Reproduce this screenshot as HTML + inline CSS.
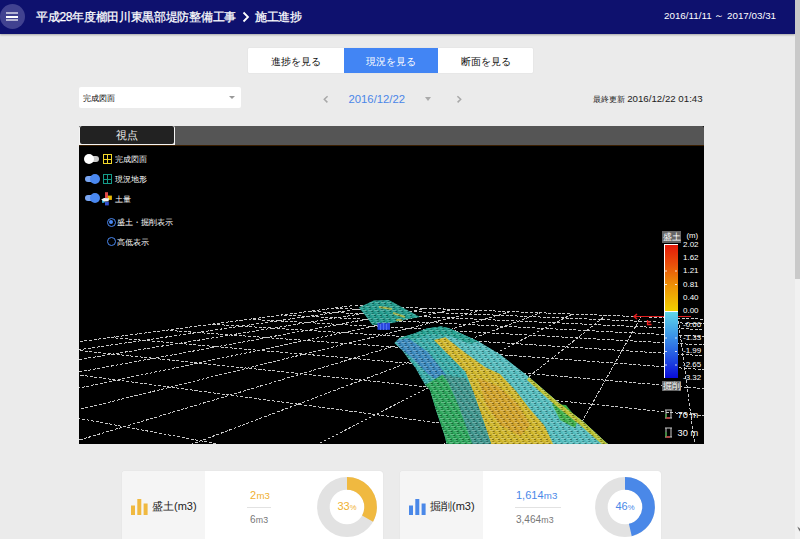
<!DOCTYPE html>
<html><head><meta charset="utf-8">
<style>
*{box-sizing:border-box;margin:0;padding:0}
html,body{width:800px;height:539px;overflow:hidden;background:#ebebeb;font-family:"Liberation Sans",sans-serif;color:#222}
.abs{position:absolute}
#hdr{position:absolute;left:0;top:0;width:795px;height:34px;background:#0e116e;box-shadow:0 1px 2px rgba(0,0,0,.3)}
#menu{position:absolute;left:0;top:4px;width:25px;height:25px;border-radius:50%;background:#414290}
#menu i{position:absolute;left:6px;width:12px;height:2px;background:#fff}
#ttl{position:absolute;left:36px;top:9px;font-size:12px;color:#fff;white-space:nowrap;letter-spacing:-0.3px;-webkit-text-stroke:0.25px #fff}
#rng{position:absolute;left:664px;top:10.2px;font-size:9.8px;color:#fff;white-space:nowrap}
#sb{position:absolute;left:795px;top:0;width:5px;height:539px;background:#f1f1f1}
#sbt{position:absolute;left:795px;top:0;width:5px;height:279px;background:#c9c9c9}
.tabs{position:absolute;left:248px;top:47.5px;width:285px;height:25.5px;background:#fff;border-radius:1px;overflow:hidden;box-shadow:0 0 1px rgba(0,0,0,.18)}
.tab{position:absolute;top:0;height:25.5px;line-height:27.5px;text-align:center;font-size:9.5px;color:#111}
#dd{position:absolute;left:79px;top:87px;width:162px;height:21px;background:#fff;border-radius:2px}
#dd span{position:absolute;left:4px;top:5.5px;font-size:8px;color:#000}
.tri{position:absolute;width:0;height:0;border-left:3px solid transparent;border-right:3px solid transparent;border-top:4px solid #999}
#panel{position:absolute;left:79px;top:126px;width:625px;height:318px;background:#000;overflow:hidden}
#ph{position:absolute;left:0;top:0;width:625px;height:19px;background:#555;border-radius:0 2px 0 0}
#pline{position:absolute;left:0;top:19px;width:625px;height:1px;background:#3a1e00}
#ptab{position:absolute;left:0;top:0;width:96px;height:19px;background:#f4f4f4;border-radius:2px 2px 0 0}
#ptab div{position:absolute;left:1px;top:0;width:94px;height:18px;background:#222;border-radius:2px;color:#eee;font-size:11px;text-align:center;line-height:18px}
.tg{position:absolute;left:5px;width:16px;height:10px}
.tg .trk{position:absolute;left:1px;top:2px;width:14px;height:6px;border-radius:3px}
.tg .knb{position:absolute;top:0;width:10px;height:10px;border-radius:50%}
.rad{position:absolute;width:9px;height:9px;border:1.3px solid #4a88f0;border-radius:50%}
.rad i{position:absolute;left:1.2px;top:1.2px;width:4px;height:4px;border-radius:50%;background:#4a88f0}
.cbl{position:absolute;width:19px;height:12px;background:#666;color:#fff;font-size:9px;line-height:12px;text-align:center}
.cbv{position:absolute;left:604px;color:#fff;font-size:8px;white-space:nowrap}
.lbl{position:absolute;color:#fff;font-size:8.3px;white-space:nowrap}
.ct{position:absolute;font-size:11px;color:#222;white-space:nowrap}
.cv{position:absolute;font-size:11px;white-space:nowrap}
.cv small,.cv2 small{font-size:0.88em;margin-left:.3px}
.pct small{font-size:0.7em}
.cv2{position:absolute;font-size:10px;color:#777;white-space:nowrap}
.sep{position:absolute;height:1px;background:#e2e2e2}
.pct{position:absolute;width:60px;text-align:center;font-size:11px;white-space:nowrap}
.card{position:absolute;top:471px;width:261px;height:90px;background:#fff;border-radius:3px;overflow:hidden;box-shadow:0 0 1px rgba(0,0,0,.15)}
.card .side{position:absolute;left:0;top:0;width:83px;height:100%;background:#f5f5f5}
</style></head><body>
<div id="hdr">
  <div id="menu"><i style="top:8px;opacity:.6"></i><i style="top:11.5px"></i><i style="top:15px;opacity:.6"></i></div>
  <div id="ttl">平成28年度櫛田川東黒部堤防整備工事</div>
  <svg class="abs" style="left:242px;top:11px" width="8" height="12"><path d="M1.5 1.5 L6 6 L1.5 10.5" stroke="#fff" stroke-width="1.8" fill="none"/></svg>
  <div id="ttl2" class="abs" style="left:255px;top:9px;font-size:12px;color:#fff;white-space:nowrap;letter-spacing:-0.3px;-webkit-text-stroke:0.25px #fff">施工進捗</div>
  <div id="rng">2016/11/11 ～ 2017/03/31</div>
</div>
<div id="sb"></div><div id="sbt"></div>
<svg class="abs" style="left:794px;top:523px" width="6" height="10"><path d="M3 3 L6 5.5 L6 8.5 L5 7.5 Z" fill="#333" stroke="#fff" stroke-width=".5"/></svg>

<div class="tabs">
  <div class="tab" style="left:0;width:96px">進捗を見る</div>
  <div class="tab" style="left:96px;width:94px;background:#4285f4;color:#fff">現況を見る</div>
  <div class="tab" style="left:190px;width:95px">断面を見る</div>
</div>

<div id="dd"><span>完成図面</span><div class="tri" style="left:150px;top:9px;border-left-width:3.5px;border-right-width:3.5px;border-top:3px solid #999"></div></div>

<svg class="abs" style="left:318px;top:90px" width="20" height="18"><path d="M9.6 6.2 L6.3 9.3 L9.4 12.4" stroke="#a8a8a8" stroke-width="1.5" fill="none"/></svg>
<div class="abs" style="left:348.5px;top:92.5px;font-size:11.3px;color:#4a86e8">2016/12/22</div>
<div class="tri" style="left:425px;top:97px;border-top-color:#aaa"></div>
<svg class="abs" style="left:450px;top:90px" width="20" height="18"><path d="M7.4 6.2 L10.7 9.3 L7.6 12.4" stroke="#a8a8a8" stroke-width="1.5" fill="none"/></svg>
<div class="abs" style="left:592.5px;top:93px;font-size:9.7px;color:#222;white-space:nowrap"><span style="font-size:8.3px">最終更新</span> 2016/12/22 01:43</div>

<div id="panel">
  <svg class="abs" style="left:0;top:0" width="625" height="318">
    <g id="grid"><path d="M3293.2 1921.6L679.2 195.3M2059.3 1919.5L638.0 193.7M825.4 1917.4L599.1 192.2M-408.5 1915.4L562.1 190.7M-1642.4 1913.3L526.9 189.4M-2028.4 1477.7L493.4 188.0M-1567.3 951.2L461.6 186.8M-1366.0 721.3L431.2 185.6M-1253.1 592.5L402.1 184.5M-1181.0 510.1L374.4 183.4M-1130.9 452.9L347.9 182.3M-1094.0 410.8L322.4 181.3M-1065.8 378.6L298.1 180.4M-1043.5 353.1L274.7 179.5M-2408.8 1912.0L-1043.5 353.1M1357.8 1918.3L-647.3 300.9M1783.1 924.3L-405.7 269.1M1146.0 503.6L-242.9 247.6M952.9 376.1L-125.8 232.2M859.6 314.5L-37.5 220.6M804.7 278.2L31.5 211.5M768.4 254.2L86.8 204.2M742.7 237.3L132.2 198.2M723.6 224.6L170.1 193.3M708.7 214.8L202.2 189.0M696.9 207.0L229.8 185.4M687.2 200.6L253.7 182.2M679.2 195.3L274.7 179.5" stroke="#c8c8c8" stroke-width="1" stroke-dasharray="3 1.6" fill="none" shape-rendering="crispEdges"/></g><g id="terrain"><defs><pattern id="tex" width="6" height="4" patternUnits="userSpaceOnUse" patternTransform="skewX(-40)"><rect x="0" y="0" width="4" height="1" fill="#fff" opacity=".3"/><rect x="4" y="1" width="2" height="1" fill="#000" opacity=".45"/><rect x="3" y="2" width="3" height="1" fill="#fff" opacity=".18"/><rect x="0" y="3" width="2" height="1" fill="#000" opacity=".3"/></pattern></defs><path d="M279.8 181.5 L294.8 174.6 L309.8 174 L341 190.9 L327 193.4 L313.5 197 L293.5 199 L286 189Z" fill="#1f9a8c"/>
<path d="M298.5 196.8 L311 196.8 L311 203.8 L298.5 203.8Z" fill="#2a48e0"/><path d="M300 181L313 183M314 187L326 191M317 194L323 194" stroke="#c8b830" stroke-width="2" opacity=".75"/><path d="M301.5 197v7M304.5 197v7M307.5 197v7" stroke="#5070f0" stroke-width="1"/>
<path d="M279.8 181.5 L294.8 174.6 L309.8 174 L341 190.9 L327 193.4 L313.5 197 L293.5 199 L286 189Z" fill="url(#tex)"/><path d="M315.3 217.0 L320.4 212.0 L334.7 207.7 L347.7 202.6 L362.0 200.5 L369.2 201.9 L380.7 206.9 L399.4 215.6 L421.0 228.5 L449.9 251.0 L479.1 276.3 L504.5 295.8 L527.8 317.2 L533.0 320.0 L368.2 320.0 L365.4 308.7 L357.0 284.0 L351.0 264.0 L346.2 259.0 L341.9 251.5 L336.2 241.4 L330.4 234.2 L323.2 224.2Z" fill="#36aca8"/>
<path d="M369.2 201.9 L380.7 206.9 L399.4 215.6 L421.0 228.5 L449.9 251.0 L479.1 276.3 L504.5 295.8 L527.8 317.2 L533.0 320.0 L475.0 320.0 L465.5 299.7 L450.0 282.0 L437.0 265.0 L421.0 248.0 L406.6 241.4 L386.5 227.1 L366.4 211.2Z" fill="#52bcbe"/>
<path d="M320.4 212.0 L334.7 207.7 L347.7 202.6 L362.0 200.5 L369.2 201.9 L380.7 206.9 L399.4 215.6 L391.0 218.0 L371.0 210.0 L351.0 208.0 L331.0 214.0Z" fill="#22a090"/>
<path d="M317.0 215.0 L329.0 212.0 L349.0 226.0 L368.0 250.0 L363.0 258.0 L349.0 248.0 L333.0 232.0 L321.0 222.0Z" fill="#3a6cd0" opacity="0.55"/>
<path d="M354.9 214.1 L370.7 229.9 L386.5 245.7 L394.1 265.6 L404.2 294.3 L412.8 320.0 L475.0 320.0 L465.5 299.7 L450.0 282.0 L437.0 265.0 L421.0 248.0 L406.6 241.4 L386.5 227.1 L366.4 211.2Z" fill="#d0b628"/>
<path d="M399.0 252.0 L419.0 260.0 L439.0 278.0 L451.0 299.0 L441.0 310.0 L421.0 299.0 L407.0 279.0Z" fill="#d29a26" opacity="0.65"/>
<path d="M363.5 248.6 L369.7 257.0 L379.7 279.9 L394.1 320.0 L412.8 320.0 L404.2 294.3 L394.1 265.6 L386.5 252.0Z" fill="#3c948c"/>
<path d="M346.2 259.0 L363.5 248.6 L369.7 257.0 L379.7 279.9 L394.1 320.0 L368.2 320.0 L365.4 308.7 L357.0 284.0 L351.0 264.0Z" fill="#2aa65a"/>
<path d="M473.0 278.0 L487.0 279.0 L499.0 294.0 L496.0 302.0 L481.0 294.0Z" fill="#3aae48"/>
<path d="M449.9 251.0 L479.1 276.3 L504.5 295.8 L527.8 317.2 L533.0 320.0 L525.0 320.0 L501.0 299.0 L476.0 279.0 L448.0 254.0Z" fill="#b8c02c"/>
<path d="M315.3 217.0 L320.4 212.0 L334.7 207.7 L347.7 202.6 L362.0 200.5 L369.2 201.9 L380.7 206.9 L399.4 215.6 L421.0 228.5 L449.9 251.0 L479.1 276.3 L504.5 295.8 L527.8 317.2 L533.0 320.0 L368.2 320.0 L365.4 308.7 L357.0 284.0 L351.0 264.0 L346.2 259.0 L341.9 251.5 L336.2 241.4 L330.4 234.2 L323.2 224.2Z" fill="url(#tex)"/></g>
  </svg>
  <div id="ph"></div>
  <div id="pline"></div>
  <div id="ptab"><div>視点</div></div>
  <!-- toggles -->
  <div class="tg" style="top:28px"><div class="trk" style="background:#c8c8c8"></div><div class="knb" style="left:0;background:#fff"></div></div>
  <div class="tg" style="top:48px"><div class="trk" style="background:#7aa6f2"></div><div class="knb" style="left:6px;background:#4a88f0"></div></div>
  <div class="tg" style="top:67px"><div class="trk" style="background:#7aa6f2"></div><div class="knb" style="left:6px;background:#4a88f0"></div></div>
  <svg class="abs" style="left:24px;top:28px" width="9" height="10" shape-rendering="crispEdges"><path d="M0.5 0.5H8.5V9.5H0.5ZM4.5 0.5V9.5M0.5 5.5H8.5" fill="none" stroke="#f2d82a" stroke-width="1"/></svg>
  <svg class="abs" style="left:24px;top:48px" width="9" height="10" shape-rendering="crispEdges"><path d="M0.5 0.5H8.5V9.5H0.5ZM4.5 0.5V9.5M0.5 5.5H8.5" fill="none" stroke="#149a88" stroke-width="1"/></svg>
  <svg class="abs" style="left:22px;top:66px" width="12" height="14"><rect x="4" y="0.2" width="3" height="5.8" fill="#e04848"/><rect x="6.8" y="3.6" width="4.1" height="4.3" fill="#e8b800"/><rect x="1" y="8" width="2.5" height="2.8" fill="#30b0e0"/><rect x="4" y="9.7" width="3.8" height="3.7" fill="#3050d0"/><path d="M0.2 7.6L3 6L8 6.2L7.6 9.2L3 9.6Z" fill="#f4f4f4"/></svg>
  <div class="lbl" style="left:36px;top:28px">完成図面</div>
  <div class="lbl" style="left:36px;top:48px">現況地形</div>
  <div class="lbl" style="left:36px;top:68px">土量</div>
  <div class="rad" style="left:28px;top:91.5px"><i></i></div>
  <div class="rad" style="left:28px;top:111px"></div>
  <div class="lbl" style="left:38px;top:90.5px">盛土・掘削表示</div>
  <div class="lbl" style="left:38px;top:110.5px">高低表示</div>
  <!-- color bar -->
  <div class="cbl" style="left:583px;top:105px">盛土</div>
  <div class="cbl" style="left:583px;top:254.5px;height:10.5px;line-height:10.5px">掘削</div>
  <svg class="abs" style="left:550px;top:184px" width="70" height="20"><path d="M5 6.5H62" stroke="#e02020" stroke-width="1.2"/><path d="M8 4 L5 6.5 L8 9" stroke="#e02020" stroke-width="1.5" fill="none"/><path d="M104 0" /><path d="M98.5 10V14.5H102.5M98.5 12H101.5" transform="translate(-80 0)" stroke="#f02020" stroke-width="1.3" fill="none"/></svg>
  <div class="abs" style="left:585px;top:118px;width:14px;height:134px;border-left:1px solid #fff;border-top:1px solid #fff;background:linear-gradient(#e41a0a 0%,#e8500a 30%,#ec9206 62%,#f0d000 100%) 0 0/100% 66px no-repeat,linear-gradient(#fff,#fff) 0 66px/100% 1px no-repeat,linear-gradient(#60d6e8 0%,#3c96e8 35%,#1e48e0 72%,#0808d8 100%) 0 67px/100% 67px no-repeat"></div>
  <svg class="abs" style="left:585px;top:118px" width="14" height="134"><path d="M1 27h2M11 27h2M1 40.5h2M11 40.5h2M1 94h2M11 94h2M1 107.5h2M11 107.5h2M1 121h2M11 121h2" stroke="#fff" stroke-width="1" opacity=".8"/></svg>
  
  <div class="lbl cbv" style="left:607.5px;top:104.5px;font-size:7.8px">(m)</div>
  <div class="cbv" style="top:114px">2.02</div>
  <div class="cbv" style="top:127px">1.62</div>
  <div class="cbv" style="top:140px">1.21</div>
  <div class="cbv" style="top:154px">0.81</div>
  <div class="cbv" style="top:167px">0.40</div>
  <div class="cbv" style="top:180px">0.00</div>
  <div class="cbv" style="top:194px">-0.66</div>
  <div class="cbv" style="top:207px">-1.33</div>
  <div class="cbv" style="top:220px">-1.99</div>
  <div class="cbv" style="top:234px">-2.65</div>
  <div class="cbv" style="top:247px">-3.32</div>
  <div class="lbl" style="left:598.5px;top:283.5px;font-size:9.3px">70 m</div>
  <div class="lbl" style="left:598.5px;top:301.5px;font-size:9.3px">30 m</div>
  <svg class="abs" style="left:585px;top:283px" width="10" height="30"><path d="M1 1H8M1 9H8M2 1V9M7 1V9" stroke="#ccc" stroke-width="1" fill="none"/><path d="M2 5V9" stroke="#2a2" stroke-width="1"/><path d="M2 9H6" stroke="#e22" stroke-width="1"/><path d="M1 19H8M1 28H8M2 19V28M7 19V28" stroke="#ccc" stroke-width="1" fill="none"/><path d="M2 23V28" stroke="#2a2" stroke-width="1"/><path d="M2 28H6" stroke="#e22" stroke-width="1"/></svg>
</div>

<div class="card" style="left:122px">
  <div class="side"></div>
  <svg class="abs" style="left:9px;top:28px" width="17" height="16"><rect x="0" y="6.5" width="4" height="9.5" fill="#f0b940"/><rect x="6.3" y="0" width="4" height="16" fill="#f0b940"/><rect x="12.6" y="4.5" width="4" height="11.5" fill="#f0b940"/></svg>
  <div class="ct" style="left:30px;top:28px">盛土(m3)</div>
  <div class="cv" style="left:128px;top:18px;color:#f0b030">2<small>m3</small></div>
  <div class="sep" style="left:125px;top:36px;width:24px"></div>
  <div class="cv2" style="left:128px;top:43px">6<small>m3</small></div>
  <svg class="abs" style="left:195px;top:6px" width="60" height="60"><circle cx="30" cy="30" r="23.6" fill="none" stroke="#e2e2e2" stroke-width="12.6"/><circle cx="30" cy="30" r="23.6" fill="none" stroke="#f0b940" stroke-width="12.6" stroke-dasharray="48.9 200" transform="rotate(-90 30 30)"/></svg>
  <div class="pct" style="left:195px;top:29px;color:#f0b030">33<small>%</small></div>
</div>
<div class="card" style="left:400px">
  <div class="side"></div>
  <svg class="abs" style="left:9px;top:28px" width="17" height="16"><rect x="0" y="6.5" width="4" height="9.5" fill="#4a88e8"/><rect x="6.3" y="0" width="4" height="16" fill="#4a88e8"/><rect x="12.6" y="4.5" width="4" height="11.5" fill="#4a88e8"/></svg>
  <div class="ct" style="left:30px;top:28px">掘削(m3)</div>
  <div class="cv" style="left:116px;top:18px;color:#4a88e8">1,614<small>m3</small></div>
  <div class="sep" style="left:115px;top:36px;width:46px"></div>
  <div class="cv2" style="left:116px;top:43px">3,464<small>m3</small></div>
  <svg class="abs" style="left:195px;top:6px" width="60" height="60"><circle cx="30" cy="30" r="23.6" fill="none" stroke="#e2e2e2" stroke-width="12.6"/><circle cx="30" cy="30" r="23.6" fill="none" stroke="#4a88e8" stroke-width="12.6" stroke-dasharray="68.2 200" transform="rotate(-90 30 30)"/></svg>
  <div class="pct" style="left:195px;top:29px;color:#4a88e8">46<small>%</small></div>
</div>
</body></html>
